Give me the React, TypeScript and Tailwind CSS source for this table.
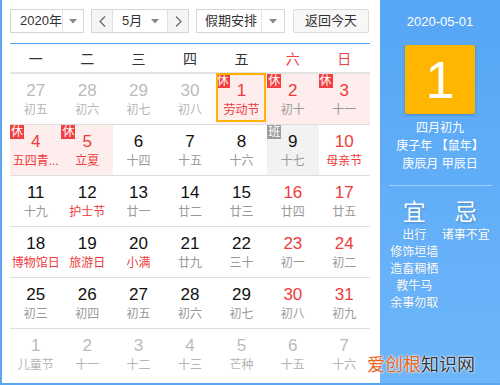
import React from 'react';

type Day = {
  n: number;
  lunar: string;
  other?: boolean;
  weekend?: boolean;
  fest?: boolean;
  badge?: '休' | '班';
  selected?: boolean;
};

const weeks: Day[][] = [
  [
    { n: 27, lunar: '初五', other: true },
    { n: 28, lunar: '初六', other: true },
    { n: 29, lunar: '初七', other: true },
    { n: 30, lunar: '初八', other: true },
    { n: 1, lunar: '劳动节', fest: true, badge: '休', selected: true },
    { n: 2, lunar: '初十', weekend: true, badge: '休' },
    { n: 3, lunar: '十一', weekend: true, badge: '休' },
  ],
  [
    { n: 4, lunar: '五四青...', fest: true, badge: '休' },
    { n: 5, lunar: '立夏', fest: true, badge: '休' },
    { n: 6, lunar: '十四' },
    { n: 7, lunar: '十五' },
    { n: 8, lunar: '十六' },
    { n: 9, lunar: '十七', badge: '班' },
    { n: 10, lunar: '母亲节', weekend: true, fest: true },
  ],
  [
    { n: 11, lunar: '十九' },
    { n: 12, lunar: '护士节', fest: true },
    { n: 13, lunar: '廿一' },
    { n: 14, lunar: '廿二' },
    { n: 15, lunar: '廿三' },
    { n: 16, lunar: '廿四', weekend: true },
    { n: 17, lunar: '廿五', weekend: true },
  ],
  [
    { n: 18, lunar: '博物馆日', fest: true },
    { n: 19, lunar: '旅游日', fest: true },
    { n: 20, lunar: '小满', fest: true },
    { n: 21, lunar: '廿九' },
    { n: 22, lunar: '三十' },
    { n: 23, lunar: '初一', weekend: true },
    { n: 24, lunar: '初二', weekend: true },
  ],
  [
    { n: 25, lunar: '初三' },
    { n: 26, lunar: '初四' },
    { n: 27, lunar: '初五' },
    { n: 28, lunar: '初六' },
    { n: 29, lunar: '初七' },
    { n: 30, lunar: '初八', weekend: true },
    { n: 31, lunar: '初九', weekend: true },
  ],
  [
    { n: 1, lunar: '儿童节', other: true },
    { n: 2, lunar: '十一', other: true },
    { n: 3, lunar: '十二', other: true },
    { n: 4, lunar: '十三', other: true },
    { n: 5, lunar: '芒种', other: true },
    { n: 6, lunar: '十五', other: true },
    { n: 7, lunar: '十六', other: true },
  ],
];

const weekdays = ['一', '二', '三', '四', '五', '六', '日'];

function Caret() {
  return (
    <svg width="8" height="5" viewBox="0 0 8 5">
      <path d="M0 0 L8 0 L4 4.5 Z" fill="#888" />
    </svg>
  );
}

function Chevron({ dir }: { dir: 'l' | 'r' }) {
  return (
    <svg width="7" height="11" viewBox="0 0 7 11">
      <polyline
        points={dir === 'l' ? '6,0.5 1,5.5 6,10.5' : '1,0.5 6,5.5 1,10.5'}
        fill="none"
        stroke="#666"
        strokeWidth="1.2"
      />
    </svg>
  );
}

function Cell({ d }: { d: Day }) {
  const bg = d.badge === '休' ? 'bg-[#fdeded]' : d.badge === '班' ? 'bg-[#f2f2f2]' : 'bg-white';
  const numColor = d.other
    ? 'text-[#bbbbbb]'
    : d.badge === '休' || d.weekend
    ? 'text-[#ee3b3b]'
    : 'text-[#111]';
  const lunarColor = d.other ? 'text-[#b5b5b5]' : d.fest ? 'text-[#ee3b3b]' : 'text-[#999]';
  return (
    <div className={`relative h-[50px] flex flex-col items-center pt-[7px] ${bg}`}>
      {d.badge && (
        <span
          className={`absolute left-0 top-0 w-[14px] h-[14px] flex items-center justify-center text-[12px] leading-none text-white ${
            d.badge === '休' ? 'bg-[#f04040]' : 'bg-[#9b9b9b]'
          }`}
        >
          {d.badge}
        </span>
      )}
      {d.selected && (
        <span className="absolute left-0 top-[-1px] right-[1px] bottom-[2px] border-2 border-[#ffb300]" />
      )}
      <div className={`text-[17px] leading-[20px] ${numColor}`}>{d.n}</div>
      <div className={`mt-[1px] text-[12px] leading-[16px] whitespace-nowrap ${lunarColor}`}>{d.lunar}</div>
    </div>
  );
}

export default function App() {
  return (
    <div
      className="relative w-[500px] h-[385px] flex border-l-2 border-b-2 border-[#5aa6f0] bg-white overflow-hidden"
      style={{ fontFamily: '"Liberation Sans", "Noto Sans CJK SC", sans-serif' }}
    >
      {/* 左侧日历 */}
      <div className="w-[378px] pl-[8px] pt-[9px] shrink-0">
        <div className="w-[360px] flex items-center text-[13px] text-[#333] whitespace-nowrap">
          <div className="w-[74px] h-[24px] flex border border-[#d5d5d5] bg-white">
            <div className="flex-1 flex items-center pl-[9px]">2020年</div>
            <div className="w-[22px] flex items-center justify-center border-l border-[#e5e5e5]">
              <Caret />
            </div>
          </div>
          <div className="ml-[7px] w-[98px] h-[24px] flex border border-[#d5d5d5] bg-white">
            <div className="w-[21px] flex items-center justify-center bg-[#f5f5f5] border-r border-[#e0e0e0]">
              <Chevron dir="l" />
            </div>
            <div className="flex-1 flex items-center justify-between pl-[9px] pr-[8px]">
              <span>5月</span>
              <Caret />
            </div>
            <div className="w-[21px] flex items-center justify-center bg-[#f5f5f5] border-l border-[#e0e0e0]">
              <Chevron dir="r" />
            </div>
          </div>
          <div className="ml-[7px] w-[89px] h-[24px] flex border border-[#d5d5d5] bg-white">
            <div className="flex-1 flex items-center pl-[8px] overflow-hidden">假期安排</div>
            <div className="w-[23px] shrink-0 flex items-center justify-center border-l border-[#e5e5e5]">
              <Caret />
            </div>
          </div>
          <div className="ml-[8px] w-[76px] h-[24px] flex items-center justify-center border border-[#dcdcdc] bg-[#f7f7f7] rounded-[2px]">
            返回今天
          </div>
        </div>

        <div className="mt-[10px] w-[360px] h-px bg-[#5aa6f0]" />

        <div className="w-[360px] grid grid-cols-7 h-[30px] items-center border-b-2 border-[#e3e3e3] text-[14px] pt-[2px]">
          {weekdays.map((w, i) => (
            <div key={w} className={`text-center ${i >= 5 ? 'text-[#ee4444]' : 'text-[#333]'}`}>
              {w}
            </div>
          ))}
        </div>

        <div className="w-[360px]">
          {weeks.map((week, r) => (
            <div
              key={r}
              className={`grid grid-cols-7 ${r < weeks.length - 1 ? 'border-b border-[#dddddd]' : ''}`}
            >
              {week.map((d, c) => (
                <Cell key={c} d={d} />
              ))}
            </div>
          ))}
        </div>
      </div>

      {/* 右侧详情 */}
      <div className="w-[120px] shrink-0 flex flex-col items-center bg-gradient-to-b from-[#56a6f6] to-[#6db6fa] text-white">
        <div className="mt-[14px] text-[13px] leading-[16px]">2020-05-01</div>
        <div className="mt-[15px] w-[70px] h-[69px] rounded-[2px] bg-[#ffb600] flex items-center justify-center text-[52px] leading-none shadow-[0_1px_3px_rgba(0,0,0,0.25)]">
          1
        </div>
        <div className="mt-[5px] text-[12px] leading-[18px] text-center">
          <div>四月初九</div>
          <div className="whitespace-nowrap">庚子年 【鼠年】</div>
          <div className="whitespace-nowrap">庚辰月 甲辰日</div>
        </div>
        <div className="mt-[12px] w-[103px] h-px bg-white/40" />
        <div className="mt-[13px] w-[100px] grid grid-cols-2 gap-x-[3px] text-center">
          <div className="flex flex-col items-center">
            <div className="text-[23px] leading-[26px] [text-shadow:1px_1px_2px_rgba(0,0,0,0.2)]">宜</div>
            <div className="mt-[2px] text-[12px] leading-[17px] whitespace-nowrap [text-shadow:0_0_1px_rgba(0,0,0,0.15)]">
              <div>出行</div>
              <div>修饰垣墙</div>
              <div>造畜稠栖</div>
              <div>教牛马</div>
              <div>余事勿取</div>
            </div>
          </div>
          <div className="flex flex-col items-center">
            <div className="text-[23px] leading-[26px] [text-shadow:1px_1px_2px_rgba(0,0,0,0.2)]">忌</div>
            <div className="mt-[2px] text-[12px] leading-[17px] whitespace-nowrap [text-shadow:0_0_1px_rgba(0,0,0,0.15)]">
              <div>诸事不宜</div>
            </div>
          </div>
        </div>
      </div>

      {/* 水印 */}
      <div className="absolute left-[365px] top-[355px] text-[18px] leading-[20px] whitespace-nowrap [text-shadow:0_0_2px_#fff,0_0_2px_#fff]">
        <span className="text-[#e8631c]">爱创根</span>
        <span className="text-[#333]">知识网</span>
      </div>
    </div>
  );
}
